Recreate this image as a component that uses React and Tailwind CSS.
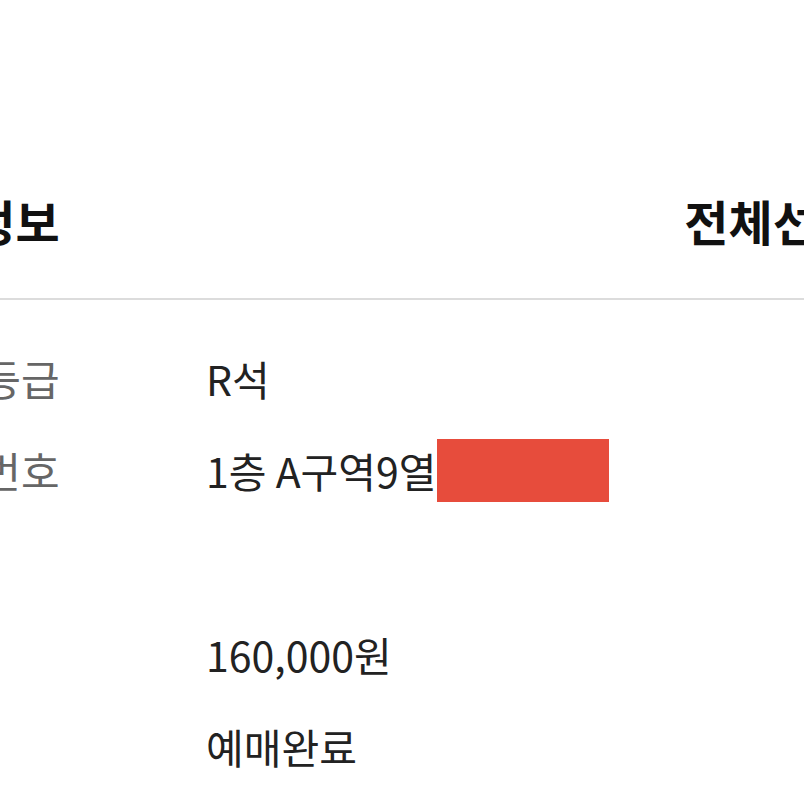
export default function App() {
  const font = { fontFamily: '"Noto Sans CJK KR", "Noto Sans", sans-serif' };
  const rows = [
    { label: "좌석등급", value: "R석" },
    { label: "좌석번호", value: "1층 A구역9열", redact: true },
    { label: "", value: "" },
    { label: "가격", value: "160,000원" },
    { label: "상태", value: "예매완료" },
  ];
  return (
    <div className="w-[804px] h-[804px] overflow-hidden bg-white" style={font}>
      <div className="h-[300px] flex flex-col justify-end">
        <div className="flex items-center justify-between pb-[54px]">
          <div className="ml-[-117px] text-[48px] font-bold text-[#111] leading-none whitespace-nowrap">예매정보</div>
          <div className="mr-[-57px] text-[48px] font-bold text-[#111] leading-none whitespace-nowrap">전체선택</div>
        </div>
        <div className="h-[2px] bg-[#dcdcdc]" />
      </div>
      <div className="flex flex-col pt-[32px]">
        {rows.map((r, i) => (
          <div key={i} className="h-[92px] flex items-center">
            <div className="w-[206px] shrink-0 text-[42px] text-[#666] leading-none whitespace-nowrap">
              <span className="inline-block ml-[-95px]">{r.label}</span>
            </div>
            <div className="flex items-center text-[41px] text-[#222] leading-none whitespace-nowrap">
              <span>{r.value}</span>
              {r.redact && <div className="w-[172px] h-[63px] bg-[#e74c3c]" />}
            </div>
          </div>
        ))}
      </div>
    </div>
  );
}
